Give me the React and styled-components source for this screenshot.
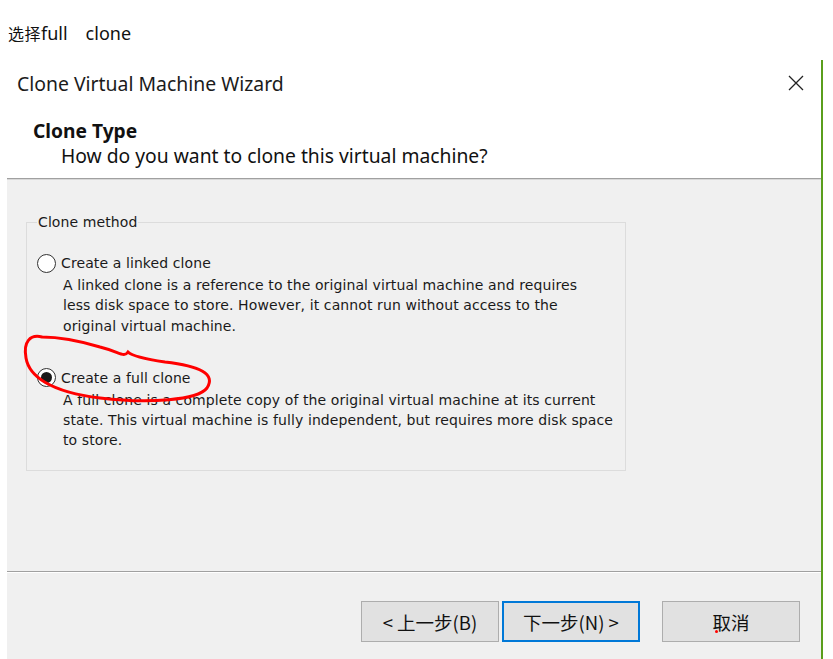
import React from "react";
import styled, { createGlobalStyle } from "styled-components";

const Global = createGlobalStyle`
  html, body { margin: 0; padding: 0; background: #ffffff; overflow: hidden; }
  body { width: 833px; height: 659px; position: relative; }
`;

const Caption = styled.div`
  font-family: "Noto Sans", "Noto Sans CJK SC", sans-serif;
  font-size: 18px;
  line-height: 22px;
  color: #111;
  padding: 22px 0 0 8px;
  height: 38px;
  white-space: pre;
`;

const Cjk = styled.span`
  font-family: "Noto Sans CJK SC", sans-serif;
  font-size: 16px;
  letter-spacing: 0.5px;
`;

const Dialog = styled.div`
  margin-left: 7px;
  width: 814px;
  height: 600px;
  border-right: 2px solid #5a9e1c;
  background: #f0f0f0;
  display: flex;
  flex-direction: column;
`;

const Header = styled.div`
  background: #ffffff;
  display: flex;
  flex-direction: column;
  border-bottom: 1px solid #a0a0a0;
  box-shadow: 0 1px 0 #d8d8d8;
`;

const TitleBar = styled.div`
  height: 46px;
  display: flex;
  align-items: center;
  justify-content: space-between;
  padding: 0 17px 0 10px;
`;

const Title = styled.div`
  font-family: "Noto Sans", "Open Sans", sans-serif;
  font-size: 19.4px;
  color: #1b1b1b;
`;

const CloseIcon = styled.svg`
  width: 16px;
  height: 16px;
  display: block;
`;

const HeaderInfo = styled.div`
  padding: 13px 0 10px 26px;
  font-family: "Noto Sans", "Open Sans", sans-serif;
  font-size: 19.3px;
  line-height: 24px;
  color: #111;
`;

const HeaderTitle = styled.div`
  font-weight: 700;
  font-size: 19.2px;
`;

const HeaderSub = styled.div`
  padding-left: 28px;
  margin-top: 1px;
`;

const Body = styled.div`
  height: 393px;
  padding: 34px 0 0 19px;
  box-sizing: border-box;
  border-bottom: 1px solid #a0a0a0;
  box-shadow: 0 1px 0 #ffffff;
`;

const Group = styled.fieldset`
  width: 600px;
  min-width: 0;
  box-sizing: border-box;
  margin: 0;
  border: 1px solid #dcdcdc;
  padding: 22px 0 21px 10px;
  font-family: "DejaVu Sans", sans-serif;
  font-size: 14px;
  letter-spacing: 0.1px;
  color: #1a1a1a;
  height: 258px;
`;

const Legend = styled.legend`
  padding: 0 1px;
  margin-left: 0;
  line-height: 18px;
`;

const Option = styled.div`
  display: flex;
  flex-direction: column;
  & + & { margin-top: 32px; }
`;

const OptionLabel = styled.label`
  display: flex;
  align-items: center;
  gap: 5px;
  line-height: 20px;
`;

const Radio = styled.span`
  width: 19px;
  height: 19px;
  box-sizing: border-box;
  border-radius: 50%;
  border: 1.3px solid #333;
  background: #fff;
  display: flex;
  align-items: center;
  justify-content: center;
  flex: none;
  &::after {
    content: "";
    width: 11px;
    height: 11px;
    border-radius: 50%;
    background: #1a1a1a;
    display: ${(p) => (p.$checked ? "block" : "none")};
  }
`;

const Desc = styled.div`
  padding-left: 26px;
  margin-top: 2px;
  line-height: 20.3px;
  white-space: nowrap;
`;

const Footer = styled.div`
  display: flex;
  align-items: flex-start;
  padding: 29px 0 0 354px;
`;

const Button = styled.button`
  width: 138px;
  height: 41px;
  box-sizing: border-box;
  background: #e1e1e1;
  border: ${(p) => (p.$default ? "2px solid #0078d7" : "1px solid #adadad")};
  font-family: "Noto Sans CJK SC", "Noto Sans", sans-serif;
  font-size: 18.5px;
  color: #111;
  padding: 0;
  margin-right: ${(p) => p.$gap || 0}px;
  position: relative;
`;

const Dot = styled.span`
  position: absolute;
  left: 52px;
  top: 28px;
  width: 3px;
  height: 3px;
  border-radius: 50%;
  background: #ff0000;
`;

const Scribble = styled.svg`
  position: absolute;
  left: 0;
  top: 0;
  width: 833px;
  height: 659px;
  pointer-events: none;
`;

export default function App() {
  return (
    <>
      <Global />
      <Caption>
        <Cjk>选择</Cjk>
        {"full　clone"}
      </Caption>
      <Dialog>
        <Header>
          <TitleBar>
            <Title>Clone Virtual Machine Wizard</Title>
            <CloseIcon viewBox="0 0 16 16">
              <path d="M1 1 L15 15 M15 1 L1 15" stroke="#222" strokeWidth="1.3" fill="none" />
            </CloseIcon>
          </TitleBar>
          <HeaderInfo>
            <HeaderTitle>Clone Type</HeaderTitle>
            <HeaderSub>How do you want to clone this virtual machine?</HeaderSub>
          </HeaderInfo>
        </Header>
        <Body>
          <Group>
            <Legend>Clone method</Legend>
            <Option>
              <OptionLabel>
                <Radio />
                Create a linked clone
              </OptionLabel>
              <Desc>
                A linked clone is a reference to the original virtual machine and requires
                <br />
                less disk space to store. However, it cannot run without access to the
                <br />
                original virtual machine.
              </Desc>
            </Option>
            <Option>
              <OptionLabel>
                <Radio $checked />
                Create a full clone
              </OptionLabel>
              <Desc>
                A full clone is a complete copy of the original virtual machine at its current
                <br />
                state. This virtual machine is fully independent, but requires more disk space
                <br />
                to store.
              </Desc>
            </Option>
          </Group>
        </Body>
        <Footer>
          <Button $gap={3}>&lt; 上一步(B)</Button>
          <Button $default $gap={22}>下一步(N) &gt;</Button>
          <Button>
            取消
            <Dot />
          </Button>
        </Footer>
      </Dialog>
      <Scribble viewBox="0 0 833 659">
        <path
          d="M42 337 C30 334 23 342 26 358 C29 376 50 392 100 398 C150 404 198 400 207 388 C216 374 200 366 165 362 C145 359 132 356 128 352 C124 358 120 352 100 347 C80 341 60 337 42 337"
          stroke="#ff0000"
          strokeWidth="3"
          fill="none"
          strokeLinecap="round"
        />
      </Scribble>
    </>
  );
}
